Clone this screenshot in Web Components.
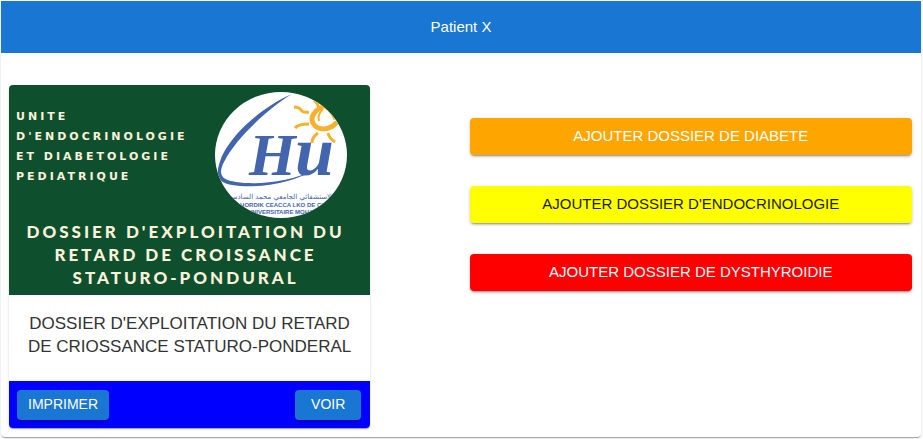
<!DOCTYPE html>
<html lang="fr">
<head>
<meta charset="utf-8">
<title>Patient X</title>
<style>
body { margin: 0; background: #fff; font-family: "Liberation Sans", Arial, sans-serif; }
</style>
</head>
<body>
<patient-panel>
  <span slot="title">Patient X</span>
  <record-card slot="record">
    <record-poster slot="media"></record-poster>
    <span>DOSSIER D'EXPLOITATION DU RETARD DE CRIOSSANCE STATURO-PONDERAL</span>
    <app-button slot="actions">IMPRIMER</app-button>
    <app-button slot="actions">VOIR</app-button>
  </record-card>
  <app-button slot="actions" wide style="--bg:#ffa500">AJOUTER DOSSIER DE DIABETE</app-button>
  <app-button slot="actions" wide style="--bg:#ffff00;--fg:#1c1c00">AJOUTER DOSSIER D'ENDOCRINOLOGIE</app-button>
  <app-button slot="actions" wide style="--bg:#ff0000">AJOUTER DOSSIER DE DYSTHYROIDIE</app-button>
</patient-panel>

<script>
const define = (name, html) => customElements.define(name, class extends HTMLElement {
  constructor() {
    super();
    this.attachShadow({ mode: 'open' }).innerHTML = html;
  }
});

define('app-button', `
<style>
:host { display: block; }
button {
  box-sizing: border-box; width: 100%; min-width: 66px; border: 0; border-radius: 4px;
  padding: 4px 11px 5px; background: var(--bg, #1976d2); color: var(--fg, #fff);
  font: 500 14px/21px "Liberation Sans", Arial, sans-serif; cursor: pointer;
  box-shadow: 0 3px 1px -2px rgba(0,0,0,.2), 0 2px 2px rgba(0,0,0,.14), 0 1px 5px rgba(0,0,0,.12);
}
:host([wide]) button { padding: 5px 16px 7px; font-size: 15px; line-height: 25px; }
</style>
<button type="button"><slot></slot></button>`);

define('record-poster', `
<style>
:host { display: block; background: #0e502d; color: #fdf1dc; }
.top { display: flex; justify-content: space-between; align-items: flex-start; padding: 7px 23px 0 7px; }
.unit { margin: 15px 0 0; font: 700 11px/20px "DejaVu Sans", sans-serif; letter-spacing: 3px; white-space: nowrap; }
svg { display: block; flex: none; width: 132px; height: 126px; }
h2 { margin: 0; padding: 2px 8px 6px 0; text-align: center; font: 900 17px/23px Lato, sans-serif; letter-spacing: 3px; white-space: nowrap; }
</style>
<div class="top">
  <p class="unit">UNITE<br>D'ENDOCRINOLOGIE<br>ET DIABETOLOGIE<br>PEDIATRIQUE</p>
  <svg viewBox="0 0 132 126" role="img" aria-label="CHU">
    <defs><clipPath id="disc"><ellipse cx="66" cy="63" rx="66" ry="63"/></clipPath></defs>
    <g clip-path="url(#disc)">
      <rect width="132" height="126" fill="#fff"/>
      <g fill="none" stroke="#f8b02f" stroke-width="3">
        <path d="M79 15q5 0 7 3t8 2M80 36q3-4 14-4M97 51q0-6 6-10M113 41q1 5 7 9M99 8q4 3 5 9"/>
        <path stroke-width="5" d="M108 15C99 18 95 26 98 31c4 8 17 8 24-1"/>
        <path stroke-width="5" d="M106 13q9 1 15 14M112 8l12 15"/>
        <path stroke-width="2" d="M108 17q-6 6-4 12"/>
      </g>
      <path fill="#4365ad" d="M77 2C57 14 22 44 9 70c-7 14-1 18 12 20 21 3 53 1 83-14-28 16-63 21-87 17C-1 90 1 79 7 64 20 37 53 12 77 2Z"/>
      <g fill="#4365ad" font-family="Liberation Serif, serif" font-style="italic" font-weight="700">
        <text x="34" y="83" font-size="60">H</text>
        <text x="80" y="83" font-size="70">u</text>
      </g>
      <g fill="#4365ad" text-anchor="middle">
        <text x="66" y="107" font-family="DejaVu Sans, sans-serif" font-size="7">الاستشفائي الجامعي محمد السادس</text>
        <text x="68" y="115" font-family="Liberation Sans, sans-serif" font-weight="700" font-size="6">HORDIK CEACCA LKO DE CO</text>
        <text x="68" y="122" font-family="Liberation Sans, sans-serif" font-weight="700" font-size="6">UNIVERSITAIRE MOHAM</text>
      </g>
    </g>
  </svg>
</div>
<h2>DOSSIER D'EXPLOITATION DU<br>RETARD DE CROISSANCE<br>STATURO-PONDURAL</h2>`);

define('record-card', `
<style>
:host { display: block; overflow: hidden; border-radius: 4px; background: #fff;
  box-shadow: 0 2px 1px -1px rgba(0,0,0,.2), 0 1px 1px rgba(0,0,0,.14), 0 1px 3px rgba(0,0,0,.12); }
.text { padding: 17px 16px 23px; text-align: center; color: #333; font-size: 17px; line-height: 23px; }
.actions { display: flex; justify-content: space-between; padding: 9px 9px 8px 8px; background: #0000ff; }
</style>
<slot name="media"></slot>
<div class="text"><slot></slot></div>
<div class="actions"><slot name="actions"></slot></div>`);

define('patient-panel', `
<style>
:host { display: block; margin: 1px 2px 2px 1px; border-radius: 4px; background: #fff;
  box-shadow: 0 2px 1px -1px rgba(0,0,0,.2), 0 1px 1px rgba(0,0,0,.14), 0 1px 3px rgba(0,0,0,.12); }
header { padding: 14px 16px; background: #1976d2; color: #fff; text-align: center; font-size: 15px; line-height: 24px; font-weight: 500; }
.body { display: flex; justify-content: space-between; align-items: flex-start; padding: 32px 9px 9px 8px; }
.record { width: 40%; }
.actions { display: grid; gap: 31px; width: 49%; padding-top: 33px; }
</style>
<header><slot name="title"></slot></header>
<div class="body">
  <div class="record"><slot name="record"></slot></div>
  <div class="actions"><slot name="actions"></slot></div>
</div>`);
</script>
</body>
</html>
